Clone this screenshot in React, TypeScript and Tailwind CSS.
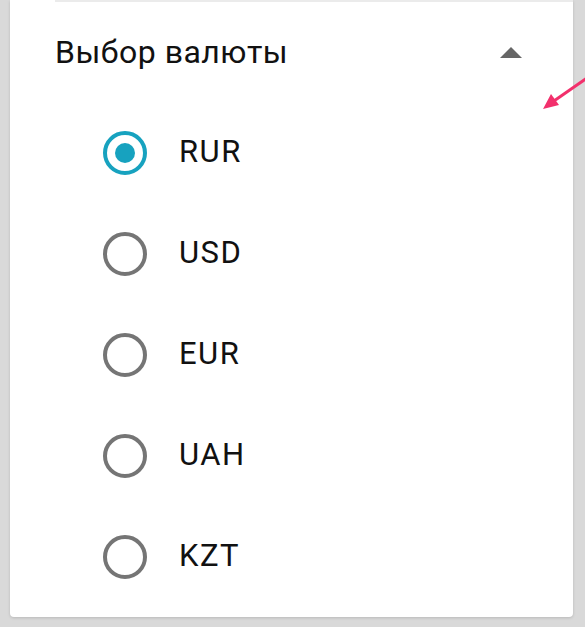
import React, { useState } from "react";

const currencies = ["RUR", "USD", "EUR", "UAH", "KZT"];

const Radio = ({ checked }: { checked: boolean }) => (
  <span
    className={
      "flex h-[44px] w-[44px] shrink-0 items-center justify-center rounded-full border-[4px] " +
      (checked ? "border-[#17a2bf]" : "border-[#757575]")
    }
  >
    {checked && <span className="h-[20px] w-[20px] rounded-full bg-[#17a2bf]" />}
  </span>
);

const App = () => {
  const [value, setValue] = useState("RUR");

  return (
    <div
      className="relative h-[627px] w-[585px] overflow-hidden bg-[#d9d9d9]"
      style={{ fontFamily: "Roboto, 'Noto Sans', sans-serif" }}
    >
      <div className="ml-[10px] h-[617px] w-[563px] rounded-b-[4px] bg-white shadow-[0_1px_3px_rgba(0,0,0,0.15)]">
        {/* header */}
        <div className="ml-[45px] border-t-2 border-[#ebebeb]">
          <div className="flex h-[100px] items-center justify-between pr-[51px]">
            <span className="text-[32px] tracking-[0.5px] text-[#111]">Выбор валюты</span>
            <svg width="22" height="11" viewBox="0 0 22 11">
              <path d="M0 11 L11 0 L22 11 Z" fill="#666" />
            </svg>
          </div>
        </div>

        {/* options */}
        <div className="pl-[93px]">
          {currencies.map((c) => (
            <button
              key={c}
              onClick={() => setValue(c)}
              className="flex h-[101px] w-full items-center gap-[32px] text-left"
            >
              <Radio checked={value === c} />
              <span className="text-[31px] tracking-[1.5px] text-[#111]">{c}</span>
            </button>
          ))}
        </div>
      </div>

      {/* pink pointer arrow */}
      <svg className="absolute left-[535px] top-[72px]" width="50" height="42" viewBox="0 0 50 42">
        <line x1="52" y1="6" x2="16" y2="31" stroke="#f2306c" strokeWidth="3" />
        <path d="M8 37 L16 22 L24 33 Z" fill="#f2306c" />
      </svg>
    </div>
  );
};

export default App;
